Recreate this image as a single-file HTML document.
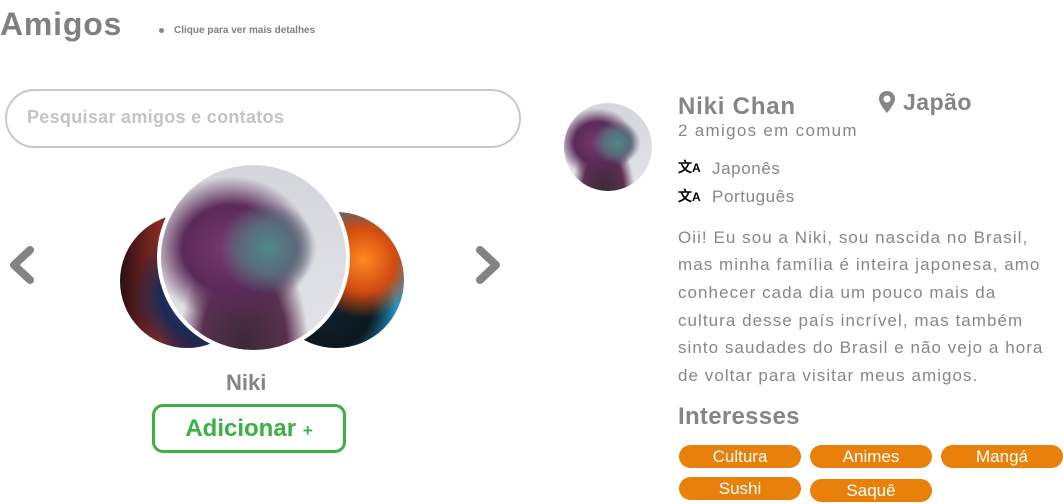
<!DOCTYPE html>
<html><head><meta charset="utf-8"><style>
*{margin:0;padding:0;box-sizing:border-box}
body{width:1063px;height:504px;background:#fff;position:relative;overflow:hidden;font-family:"Liberation Sans",sans-serif;color:#878787}
.a{position:absolute;white-space:nowrap}
.circ{position:absolute;border-radius:50%;overflow:hidden}
.tag{position:absolute;width:122px;height:23px;border-radius:12px;background:#e8800a;color:#fff;font-size:17px;text-align:center;line-height:23px}
.p{font-size:17px;letter-spacing:1.05px;left:678px}
</style></head><body>
<div class="a" style="left:0;top:6px;font-size:32px;font-weight:bold;color:#808080;letter-spacing:0.8px">Amigos</div>
<div class="a" style="left:159px;top:28px;width:5px;height:5px;border-radius:50%;background:#888"></div>
<div class="a" style="left:174px;top:25px;font-size:10px;font-weight:bold;color:#808080">Clique para ver mais detalhes</div>
<div class="a" style="left:5px;top:89px;width:516px;height:59px;border:2px solid #c8c8c8;border-radius:30px"></div>
<div class="a" style="left:27px;top:107px;font-size:18px;font-weight:bold;color:#c4c4c4;letter-spacing:.3px">Pesquisar amigos e contatos</div>

<svg class="a" style="left:6px;top:245px" width="32" height="42" viewBox="0 0 32 42"><path d="M24 5 L8 20 L24 35" fill="none" stroke="#838383" stroke-width="8" stroke-linecap="round" stroke-linejoin="round"/></svg>
<svg class="a" style="left:472px;top:245px" width="32" height="42" viewBox="0 0 32 42"><path d="M8 5 L24 20 L8 35" fill="none" stroke="#838383" stroke-width="8" stroke-linecap="round" stroke-linejoin="round"/></svg>

<div class="circ" style="left:120px;top:214px;width:134px;height:134px;background:radial-gradient(circle at 60% 60%,#2a4f8a 0%,#1b2a55 35%,transparent 60%),linear-gradient(90deg,#2a0f14 0%,#8c2a22 30%,#3a1a40 55%,#1d3a78 80%)"></div>
<div class="circ" style="left:268px;top:212px;width:136px;height:136px;background:radial-gradient(circle at 70% 35%,#ff8a20 0%,#d24a10 25%,transparent 45%),radial-gradient(circle at 45% 70%,#10202a 0%,#0c1820 35%,transparent 55%),linear-gradient(90deg,#e06a10,#1a6c9a 70%,#22a0d0)"></div>
<div class="circ" style="left:157px;top:161px;width:193px;height:193px;border:4px solid #fff;background:radial-gradient(ellipse at 58% 45%,#4e8a86 0%,#5a6a7a 18%,transparent 32%),radial-gradient(ellipse at 38% 45%,#7a3a70 0%,#5a2a58 30%,transparent 50%),radial-gradient(ellipse at 45% 100%,#3a2a35 0%,#5a3050 30%,transparent 45%),linear-gradient(#d4d6dc,#e2e4e8)"></div>

<div class="a" style="left:226px;top:370px;font-size:22px;font-weight:bold;color:#858585">Niki</div>
<div class="a" style="left:152px;top:404px;width:194px;height:49px;border:3px solid #3cb043;border-radius:11px;color:#3cb043;font-size:24px;font-weight:bold;text-align:center;line-height:43px">Adicionar <span style="font-size:17px">+</span></div>

<div class="circ" style="left:564px;top:103px;width:88px;height:88px;background:radial-gradient(ellipse at 60% 45%,#4e8a86 0%,#5a6a7a 18%,transparent 32%),radial-gradient(ellipse at 38% 45%,#7a3a70 0%,#5a2a58 30%,transparent 50%),radial-gradient(ellipse at 45% 100%,#3a2a35 0%,#5a3050 30%,transparent 45%),linear-gradient(#d4d6dc,#e2e4e8)"></div>

<div class="a" style="left:678px;top:93px;font-size:24px;font-weight:bold;color:#858585;letter-spacing:.8px">Niki Chan</div>
<svg class="a" style="left:878px;top:90px" width="18" height="24" viewBox="0 0 18 24"><path d="M9 1 C4 1 1 4.5 1 9 C1 14 9 23 9 23 C9 23 17 14 17 9 C17 4.5 14 1 9 1 Z M9 5.5 A3.5 3.5 0 1 1 8.99 5.5 Z" fill="#878787" fill-rule="evenodd"/></svg>
<div class="a" style="left:903px;top:89px;font-size:23px;font-weight:bold;color:#858585;letter-spacing:.5px">Japão</div>
<div class="a" style="left:678px;top:121px;font-size:17px;letter-spacing:1.3px">2 amigos em comum</div>

<div class="a" style="left:678px;top:157px;font-size:14px;color:#000;font-weight:bold">文<span style="font-size:12px">A</span></div>
<div class="a" style="left:712px;top:159px;font-size:17px;letter-spacing:.6px">Japonês</div>
<div class="a" style="left:678px;top:186px;font-size:14px;color:#000;font-weight:bold">文<span style="font-size:12px">A</span></div>
<div class="a" style="left:712px;top:187px;font-size:17px;letter-spacing:.6px">Português</div>

<div class="a p" style="top:228px">Oii! Eu sou a Niki, sou nascida no Brasil,</div>
<div class="a p" style="top:255px">mas minha família é inteira japonesa, amo</div>
<div class="a p" style="top:283px">conhecer cada dia um pouco mais da</div>
<div class="a p" style="top:311px">cultura desse país incrível, mas também</div>
<div class="a p" style="top:338px">sinto saudades do Brasil e não vejo a hora</div>
<div class="a p" style="top:366px">de voltar para visitar meus amigos.</div>

<div class="a" style="left:678px;top:403px;font-size:24px;font-weight:bold;color:#858585;letter-spacing:.3px">Interesses</div>
<div class="tag" style="left:679px;top:445px">Cultura</div>
<div class="tag" style="left:810px;top:445px">Animes</div>
<div class="tag" style="left:941px;top:445px">Mangá</div>
<div class="tag" style="left:679px;top:477px">Sushi</div>
<div class="tag" style="left:810px;top:479px">Saquê</div>
</body></html>
